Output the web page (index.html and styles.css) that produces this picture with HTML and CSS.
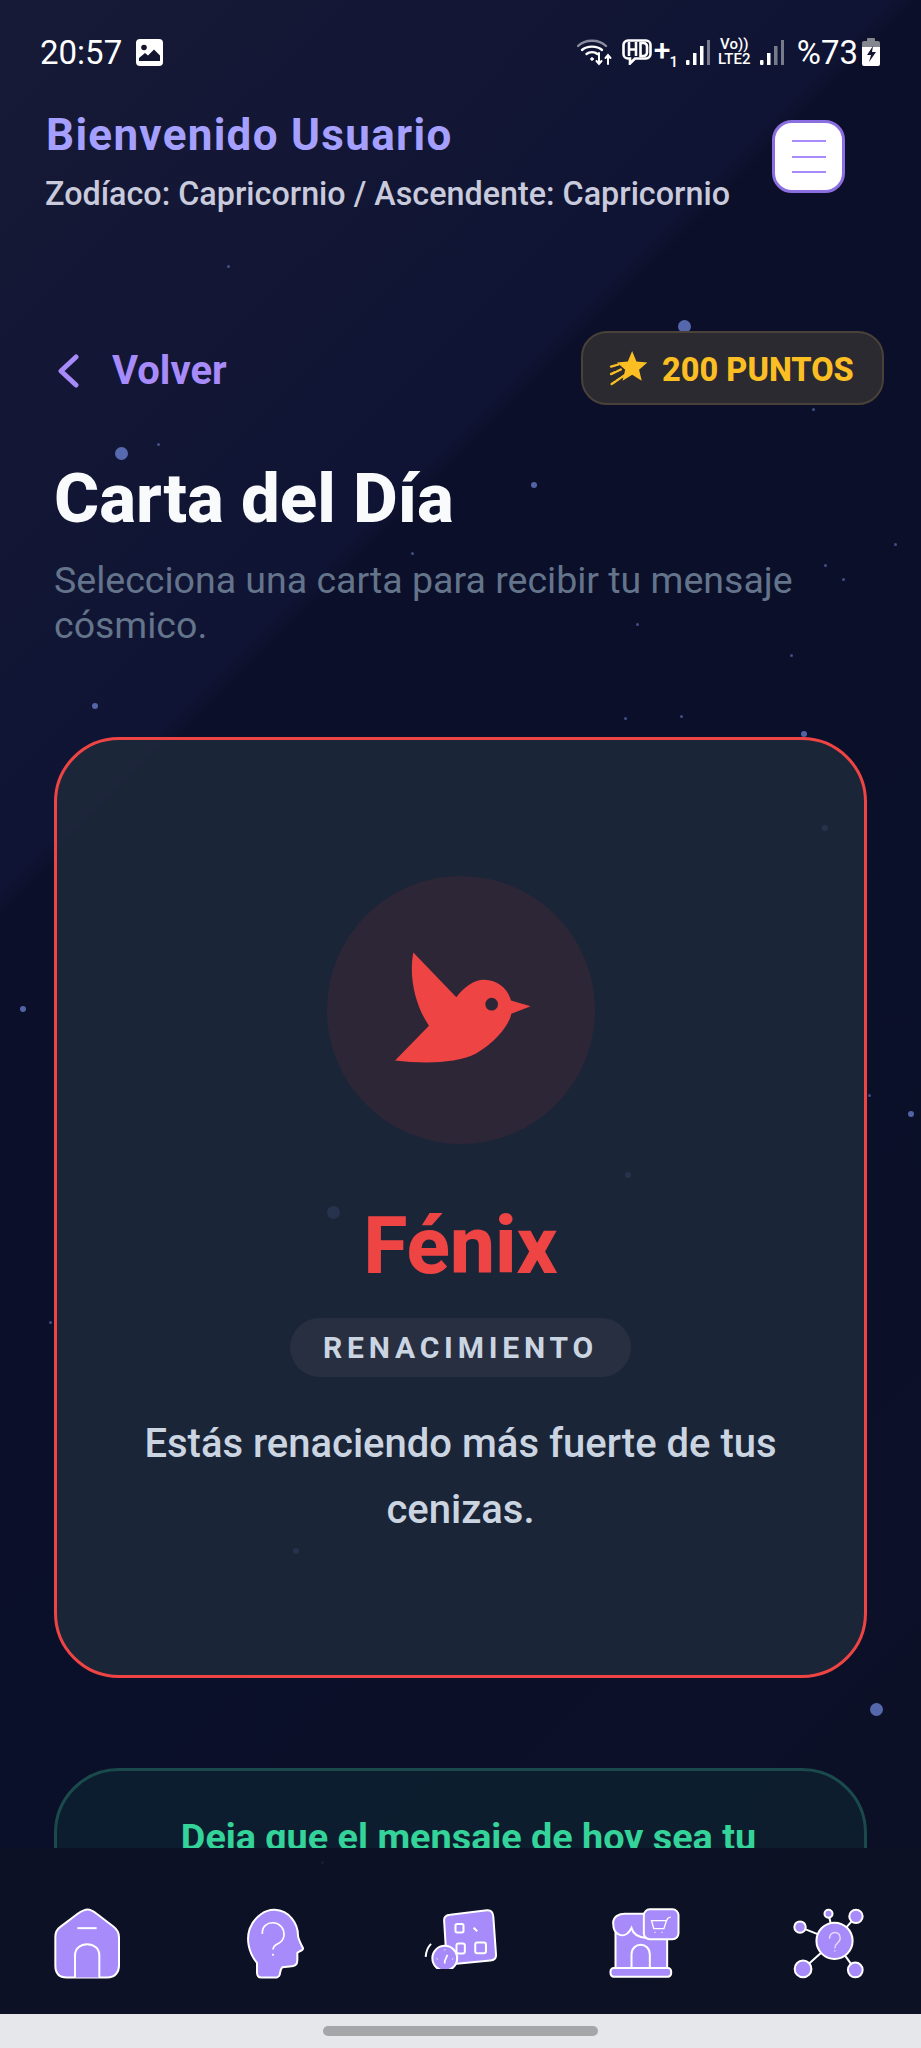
FILE: index.html
```html
<!DOCTYPE html>
<html lang="es">

<head>
  <meta charset="UTF-8">
  <meta name="viewport" content="width=device-width, initial-scale=1.0">
  <title>Carta del Día</title>
  <link rel="stylesheet" href="styles.css">
</head>

<body>
  <div class="screen">
    <!-- stars on the background -->
    <div class="stars">
      <i class="star s-big" style="left:678px;top:320px"></i>
      <i class="star s-big" style="left:115px;top:447px"></i>
      <i class="star s-mid" style="left:531px;top:482px"></i>
      <i class="star s-mid" style="left:92px;top:703px"></i>
      <i class="star s-mid" style="left:801px;top:731px"></i>
      <i class="star s-mid" style="left:20px;top:1006px"></i>
      <i class="star s-mid" style="left:908px;top:1111px"></i>
      <i class="star s-big" style="left:870px;top:1703px"></i>
      <i class="star s-big" style="left:327px;top:1206px"></i>
      <i class="star s-mid" style="left:822px;top:825px"></i>
      <i class="star s-mid" style="left:500px;top:1121px"></i>
      <i class="star s-mid" style="left:625px;top:1172px"></i>
      <i class="star s-mid" style="left:293px;top:1548px"></i>
      <i class="star s-tiny" style="left:227px;top:265px"></i>
      <i class="star s-tiny" style="left:157px;top:443px"></i>
      <i class="star s-tiny" style="left:411px;top:552px"></i>
      <i class="star s-tiny" style="left:894px;top:543px"></i>
      <i class="star s-tiny" style="left:824px;top:564px"></i>
      <i class="star s-tiny" style="left:842px;top:578px"></i>
      <i class="star s-tiny" style="left:636px;top:623px"></i>
      <i class="star s-tiny" style="left:790px;top:654px"></i>
      <i class="star s-tiny" style="left:812px;top:408px"></i>
      <i class="star s-tiny" style="left:624px;top:717px"></i>
      <i class="star s-tiny" style="left:680px;top:715px"></i>
      <i class="star s-tiny" style="left:49px;top:1321px"></i>
      <i class="star s-tiny" style="left:868px;top:1094px"></i>
      <i class="star s-tiny" style="left:321px;top:1861px"></i>
      <i class="star s-tiny" style="left:492px;top:934px"></i>
    </div>

    <div class="status-bar">
      <div class="status-left">
        <span class="clock">20:57</span>
        <svg class="ic-picture" viewBox="0 0 27 27">
          <rect width="27" height="27" rx="4" fill="#fff" />
          <circle cx="8" cy="8.500" r="2.800" fill="#12152f" />
          <path d="M3 22v-3l6-5 3 2.500 6-6 6 6V22z" fill="#12152f" />
        </svg>
      </div>
      <div class="status-right">
        <svg class="ic-wifi" viewBox="0 0 36 28" fill="none" stroke="#fff" stroke-linecap="round">
          <path d="M1 8C8 1 22 1 29 8" stroke="#8a8d9c" stroke-width="2.400" />
          <path d="M5 12c5-4.500 15-4.500 20 0M9.500 16c3-2.500 8-2.500 11 0" stroke-width="2.400" />
          <circle cx="15" cy="21" r="1.300" fill="#fff" />
          <path d="M22 15v11M19.500 23l2.500 3 2.500-3M31 26V17M28.500 20l2.500-3 2.500 3" stroke-width="2" />
        </svg>
        <svg class="ic-hd" viewBox="0 0 30 26" fill="none" stroke="#fff" stroke-width="2.600">
          <path d="M6 1.500h18a4.500 4.500 0 0 1 4.500 4.500v9a4.500 4.500 0 0 1-4.500 4.500H13l-5 5v-5H6A4.500 4.500 0 0 1 1.500 15V6A4.500 4.500 0 0 1 6 1.500z" />
          <path d="M7 3v14M14 3v14M7 10.500h7M18.500 4v13h3a3.500 3.500 0 0 0 3.500-3.500v-6A3.500 3.500 0 0 0 21.500 4z" />
        </svg>
        <span class="plus">+<sub>1</sub></span>
        <svg class="ic-signal" viewBox="0 0 24 25">
          <rect x="0" y="20" width="3.500" height="5" rx="1" fill="#fff" />
          <rect x="7" y="13" width="3.500" height="12" fill="#fff" />
          <rect x="14" y="6" width="3.500" height="19" fill="#fff" />
          <rect x="21" y="0" width="3" height="25" fill="#777a8a" />
        </svg>
        <span class="volte">Vo))<br>LTE2</span>
        <svg class="ic-signal" viewBox="0 0 24 25">
          <rect x="0" y="20" width="3.500" height="5" rx="1" fill="#fff" />
          <rect x="7" y="13" width="3.500" height="12" fill="#fff" />
          <rect x="14" y="6" width="3.500" height="19" fill="#777a8a" />
          <rect x="21" y="0" width="3" height="25" fill="#777a8a" />
        </svg>
        <span class="battery-num">%73</span>
        <svg class="ic-battery" viewBox="0 0 18 28">
          <path d="M6 0h6a1 1 0 0 1 1 1v2h3a2 2 0 0 1 2 2v4H0V5a2 2 0 0 1 2-2h3V1a1 1 0 0 1 1-1z" fill="#85878f" />
          <path d="M0 9h18v17a2 2 0 0 1-2 2H2a2 2 0 0 1-2-2z" fill="#fff" />
          <path d="M11 8l-6 9h4l-2 7 7-10h-4z" fill="#12152f" />
        </svg>
      </div>
    </div>

    <div class="app-header">
      <div class="user-info">
        <h2 class="welcome">Bienvenido Usuario</h2>
        <p class="zodiac">Zodíaco: Capricornio / Ascendente: Capricornio</p>
      </div>
      <button class="menu-btn"><span></span><span></span><span></span></button>
    </div>

    <div class="content">
      <div class="top-row">
        <a class="back-link">
          <svg class="ic-back" viewBox="0 0 24 34" fill="none" stroke="#a78bfa" stroke-width="5" stroke-linecap="round" stroke-linejoin="round">
            <path d="M20 3L5 17l15 14" />
          </svg>
          Volver
        </a>
        <div class="points">
          <svg class="ic-star" viewBox="30 28 118 110">
            <path d="M100 30L113 62L146 65L121 87L129 120L100 102L71 120L79 87L54 65L87 62Z" fill="#fbbf24" />
            <path d="M36 77L58 71M36 100L70 84M38 130L76 104" stroke="#fbbf24" stroke-width="7" stroke-linecap="round" stroke-dasharray="14 5" fill="none" />
          </svg>
          200 PUNTOS
        </div>
      </div>

      <h1 class="page-title">Carta del Día</h1>
      <p class="page-sub">Selecciona una carta para recibir tu mensaje cósmico.</p>

      <div class="card">
        <div class="card-icon">
          <svg class="ic-bird" viewBox="288 305 408 335">
            <path d="M288 630L390 526C352 470 328 385 343 306L472 440C495 410 525 388 555 388C600 388 628 420 636 450L695 467L637 490C630 525 590 575 530 610C470 640 370 640 288 630Z" fill="#ef4444" />
            <circle cx="578" cy="461" r="19" fill="#2d2637" />
          </svg>
        </div>
        <h2 class="card-name">Fénix</h2>
        <span class="card-tag">RENACIMIENTO</span>
        <p class="card-text">Estás renaciendo más fuerte de tus cenizas.</p>
      </div>

      <div class="message-card">
        <p class="message-text">Deja que el mensaje de hoy sea tu</p>
      </div>
    </div>

    <nav class="bottom-nav">
      <svg class="nav-home" viewBox="162 508 198 212" fill="#a78bfa" stroke="#fff" stroke-width="6">
        <path d="M263 512C250 512 240 520 230 527L180 565C170 572 166 585 166 595V680C166 705 180 716 200 716H322C345 716 357 700 357 680V595C357 580 352 572 340 563L290 525C280 517 272 512 263 512Z" />
        <path d="M232 568H290" />
        <path d="M225 716V650C225 605 298 605 298 650V716" />
      </svg>
      <svg class="nav-head" viewBox="742 508 174 212" fill="#a78bfa" stroke="#fff" stroke-width="6">
        <path d="M772 700V672C745 640 740 600 750 570C765 530 800 512 825 513C870 515 895 555 895 590C895 600 905 618 910 628C912 635 895 638 893 642V665C893 680 880 683 870 683L848 685C842 690 842 700 840 708C838 715 830 717 825 716H785C775 716 772 710 772 700Z" />
        <path d="M788 585C785 540 855 540 853 590C850 620 822 610 820 632M820 645V651" fill="none" stroke-width="5" />
      </svg>
      <svg class="nav-game" viewBox="30 40 218 182" fill="#a78bfa" stroke="#fff" stroke-width="6">
        <path d="M108 60L218 47C232 46 236 54 237 66L245 178C246 190 240 196 228 197L112 208C102 208 98 200 97 190L90 76C90 66 96 61 108 60Z" />
        <rect x="124" y="88" width="24" height="25" rx="5" fill="none" />
        <path d="M178 99L189 109" fill="none" />
        <rect x="183" y="143" width="32" height="32" rx="6" fill="none" />
        <rect x="127" y="146" width="25" height="30" rx="6" fill="none" />
        <circle cx="92" cy="190" r="37" />
        <path d="M35 186C36 170 42 156 51 147" fill="none" />
        <path d="M100 180L92 198V206M92 164V166M68 192H70M115 192H117" fill="none" stroke-width="5" />
      </svg>
      <svg class="nav-shop" viewBox="448 510 212 210" fill="#a78bfa" stroke="#fff" stroke-width="6">
        <path d="M467 570V692H622V590" />
        <path d="M460 555C460 535 478 527 495 527H560V600C535 598 520 590 515 570C505 590 490 595 478 590C465 585 460 575 460 555Z" />
        <path d="M515 692V650C515 610 570 610 570 650V692" />
        <rect x="452" y="690" width="182" height="26" rx="10" />
        <rect x="552" y="514" width="104" height="90" rx="18" />
        <path d="M575 548H620L612 572H582ZM620 548L625 540L633 537M584 583H587M605 583H608" fill="none" stroke-width="4" />
      </svg>
      <svg class="nav-net" viewBox="1000 508 212 212" fill="#a78bfa" stroke="#fff" stroke-width="6">
        <path d="M1124 606L1106 525M1124 606L1188 533M1124 606L1021 565M1124 606L1030 690M1124 606L1186 693" />
        <circle cx="1106" cy="525" r="12" />
        <circle cx="1188" cy="533" r="20" />
        <circle cx="1021" cy="565" r="17" />
        <circle cx="1030" cy="690" r="25" />
        <circle cx="1186" cy="693" r="22" />
        <circle cx="1124" cy="606" r="54" />
        <path d="M1109 600C1109 575 1141 575 1141 598C1141 612 1125 612 1125 628M1125 634V638" fill="none" stroke="#e4dcff" stroke-width="4.500" />
      </svg>
    </nav>

    <div class="home-bar"><span></span></div>
  </div>
</body>

</html>
```
FILE: styles.css
```css
* {
  box-sizing: border-box;
}

html,
body {
  margin: 0;
  padding: 0;
}

body {
  font-family: Roboto, Arial, sans-serif;
  background: #0b0f28;
}

.screen {
  position: relative;
  width: 921px;
  height: 2048px;
  display: flex;
  flex-direction: column;
  overflow: hidden;
  background: linear-gradient(135deg, #161a36 0%, #101434 30%, #0b0f29 31%, #0b102a 60%, #0c1026 100%);
}

.stars {
  position: absolute;
  inset: 0;
  pointer-events: none;
}

.star {
  position: absolute;
  border-radius: 50%;
  background: #6478c4;
}

.s-big {
  width: 13px;
  height: 13px;
  opacity: 0.85;
}

.s-mid {
  width: 6px;
  height: 6px;
  opacity: 0.8;
}

.s-tiny {
  width: 3px;
  height: 3px;
  opacity: 0.6;
}

.status-bar {
  position: relative;
  height: 104px;
  flex: none;
  padding: 32px 41px 0 40px;
  display: flex;
  justify-content: space-between;
  align-items: flex-start;
  color: #fff;
}

.status-left,
.status-right {
  display: flex;
  align-items: center;
  height: 40px;
}

.clock {
  font-size: 33px;
  margin-right: 14px;
}

.ic-picture {
  width: 27px;
  height: 27px;
}

.ic-wifi {
  width: 36px;
  height: 28px;
  margin-right: 9px;
}

.ic-hd {
  width: 30px;
  height: 26px;
}

.plus {
  width: 23px;
  margin: 0 9px 0 2px;
  font-size: 30px;
  font-weight: 500;
  line-height: 1;
  white-space: nowrap;
}

.plus sub {
  font-size: 15px;
  margin-left: -1px;
}

.ic-signal {
  width: 24px;
  height: 25px;
}

.volte {
  width: 35px;
  margin: 0 8px 0 7px;
  font-size: 15px;
  line-height: 15px;
  font-weight: 500;
  text-align: center;
}

.battery-num {
  font-size: 33px;
  margin: 0 4px 0 13px;
}

.ic-battery {
  width: 18px;
  height: 28px;
}

.app-header {
  position: relative;
  height: 116px;
  flex: none;
  padding: 6px 75px 0 46px;
  display: flex;
  justify-content: space-between;
  align-items: flex-start;
}

.welcome {
  margin: 0 0 15px;
  font-size: 44px;
  line-height: 50px;
  font-weight: 700;
  letter-spacing: 1.300px;
  color: #a5a0ff;
}

.zodiac {
  margin: 0 0 0 -1px;
  font-size: 32.300px;
  line-height: 38px;
  font-weight: 500;
  color: #c9cbdc;
  white-space: nowrap;
}

.menu-btn {
  width: 73px;
  height: 73px;
  margin: 10px 1px 0 0;
  padding: 0;
  border: 3px solid #8b6fe0;
  border-radius: 20px;
  background: #fff;
  display: flex;
  flex-direction: column;
  align-items: center;
  justify-content: center;
  gap: 13.500px;
}

.menu-btn span {
  display: block;
  width: 34px;
  height: 2px;
  background: #a78bfa;
}

.content {
  position: relative;
  flex: 1;
  min-height: 0;
  overflow: hidden;
  padding: 111px 54px 0;
}

.top-row {
  display: flex;
  justify-content: space-between;
  align-items: center;
  margin-right: -18px;
}

.back-link {
  display: flex;
  align-items: center;
  gap: 32px;
  padding: 5px 0 0 2px;
  font-size: 40px;
  font-weight: 700;
  color: #a78bfa;
}

.ic-back {
  width: 24px;
  height: 34px;
}

.points {
  width: 303px;
  height: 74px;
  margin-right: 1px;
  display: flex;
  align-items: center;
  gap: 14px;
  padding: 3px 0 0 26px;
  border: 2px solid #4a4238;
  border-radius: 26px;
  background: #2a2a30;
  font-size: 32.500px;
  font-weight: 800;
  color: #fbbf24;
}

.ic-star {
  width: 39px;
  height: 37px;
  margin-top: -3px;
}

.page-title {
  margin: 56px 0 0;
  font-size: 69px;
  line-height: 76px;
  font-weight: 800;
  color: #f8fafc;
}

.page-sub {
  margin: 21px 0 0;
  font-size: 37.500px;
  line-height: 45px;
  color: #64748b;
}

.card {
  margin-top: 89px;
  height: 941px;
  padding-top: 136px;
  border: 3px solid #ef4444;
  border-radius: 65px;
  background: rgba(30, 41, 59, 0.85);
  display: flex;
  flex-direction: column;
  align-items: center;
}

.card-icon {
  width: 268px;
  height: 268px;
  border-radius: 50%;
  background: #2d2637;
  display: flex;
  align-items: center;
  justify-content: center;
}

.ic-bird {
  width: 136px;
  height: 112px;
  margin: 0 -4px 5px 0;
}

.card-name {
  margin: 56px 0 0;
  font-size: 80px;
  line-height: 92px;
  font-weight: 800;
  color: #ef4444;
}

.card-tag {
  margin-top: 26px;
  width: 341px;
  height: 59px;
  border-radius: 30px;
  background: #272f41;
  font-size: 30px;
  line-height: 59px;
  font-weight: 700;
  letter-spacing: 4.800px;
  text-align: center;
  color: #cbd5e1;
}

.card-text {
  margin: 34px 60px 0;
  font-size: 40px;
  line-height: 66px;
  font-weight: 500;
  text-align: center;
  color: #cbd5e1;
}

.message-card {
  margin-top: 90px;
  height: 300px;
  padding: 44px 0 0 16px;
  border: 3px solid #1a4a4c;
  border-radius: 65px;
  background: rgba(20, 185, 129, 0.08);
}

.message-text {
  margin: 0;
  font-size: 37.800px;
  line-height: 44px;
  font-weight: 700;
  text-align: center;
  color: #34d399;
}

.bottom-nav {
  position: relative;
  flex: none;
  height: 166px;
  padding-top: 60px;
  display: grid;
  grid-template-columns: repeat(5, 1fr);
  justify-items: center;
  align-items: start;
  background: rgba(13, 17, 36, 0.8);
}

.nav-home {
  width: 66px;
  height: 71px;
  margin-right: 10px;
}

.nav-head {
  width: 58px;
  height: 71px;
}

.nav-game {
  width: 73px;
  height: 61px;
}

.nav-shop {
  width: 71px;
  height: 70px;
}

.nav-net {
  width: 71px;
  height: 71px;
}

.home-bar {
  position: relative;
  flex: none;
  height: 34px;
  display: flex;
  justify-content: center;
  padding-top: 12px;
  background: #e5e7eb;
}

.home-bar span {
  width: 275px;
  height: 10px;
  border-radius: 5px;
  background: #a5a6a8;
}
```
